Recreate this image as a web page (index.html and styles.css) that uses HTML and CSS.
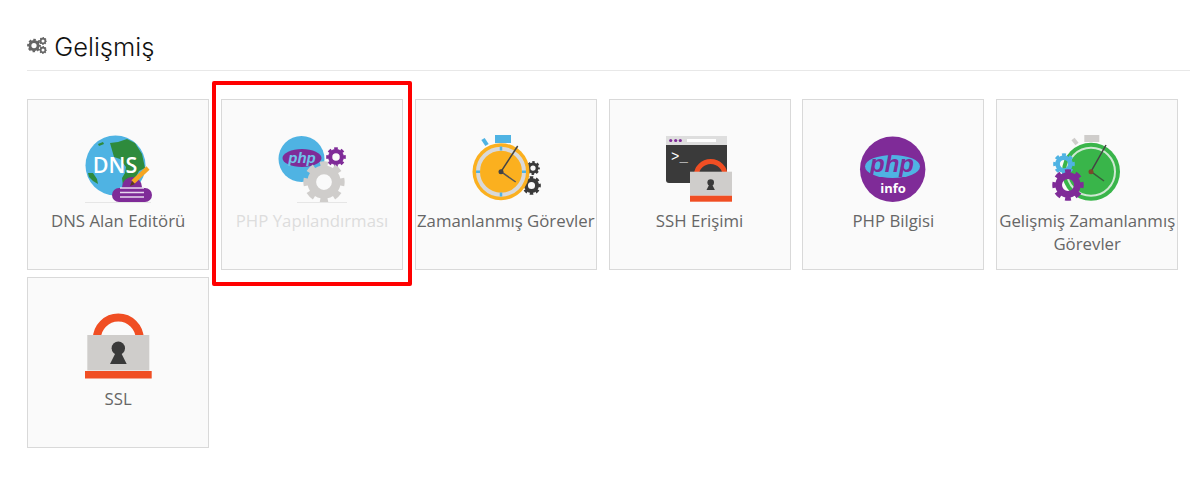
FILE: index.html
```html
<!DOCTYPE html>
<html lang="tr">
<head>
<meta charset="utf-8">
<title>Gelişmiş</title>
<link rel="stylesheet" href="styles.css">
</head>
<body>
<svg class="defs" aria-hidden="true">
  <symbol id="gear" viewBox="-12 -12 24 24">
    <circle r="7" fill="none" stroke="currentColor" stroke-width="5"/>
    <circle r="10" fill="none" stroke="currentColor" stroke-width="3.6" pathLength="16" stroke-dasharray="1.100 0.900" stroke-dashoffset="0.550"/>
  </symbol>
</svg>
<main class="section">
  <h2 class="title">
    <svg class="title-icon" viewBox="0 0 20 18">
      <use href="#gear" x="0" y="1.5" width="14" height="14"/>
      <use href="#gear" x="12" y="0" width="8" height="8"/>
      <use href="#gear" x="12" y="9" width="8" height="8"/>
    </svg>
    Gelişmiş
  </h2>
  <div class="grid">
    <a class="card">
      <svg class="icon" viewBox="0 0 70 70">
        <circle cx="32.500" cy="31.500" r="30" fill="#4fb3e3"/>
        <path class="land" d="M27 9l8-1 9-3 8 4 7 11 3 14-6 3-4 8-3 6-9 1-1-8 3-5 1-6-6-8-6-2z"/>
        <path class="land" d="M5 39l5 0 4 6 1 5-5-3-4-4z"/>
        <path class="land" d="M15 10l5-2 1 2-5 2z"/>
        <text class="dns" x="32" y="39">DNS</text>
        <rect x="29" y="54" width="40" height="14" rx="7" fill="#7f2b98"/>
        <circle cx="49" cy="53" r="10" fill="#7f2b98"/>
        <path d="M37 54h24M37 58.500h24M37 63h24" stroke="#e8d8ee" stroke-width="1.400"/>
        <path d="M50 48l15-14" stroke="#f5a623" stroke-width="4.500"/>
        <path d="M47 52l2-5 3 3z" fill="#5b3a1e"/>
        <path d="M2 68.500h66" class="faint"/>
      </svg>
      <span class="label">DNS Alan Editörü</span>
    </a>
    <a class="card card-off">
      <svg class="icon" viewBox="0 0 70 70">
        <circle cx="24.500" cy="25" r="23" fill="#4fb3e3"/>
        <ellipse cx="25" cy="24" rx="19.500" ry="9" fill="#7f2b98"/>
        <text class="php" x="25" y="29" fill="#6fc3ea">php</text>
        <use class="c-purple" href="#gear" x="49" y="13" width="20" height="20"/>
        <use class="c-grey" href="#gear" x="26" y="27" width="42" height="42"/>
        <path d="M20 68.500h52" class="faint"/>
      </svg>
      <span class="label">PHP Yapılandırması</span>
      <div class="mark"></div>
    </a>
    <a class="card">
      <svg class="icon" viewBox="0 0 70 70">
        <rect x="24" y="1" width="16" height="8" fill="#4fb3e3"/>
        <path d="M12 5l4 6" stroke="#4fb3e3" stroke-width="4"/>
        <use class="c-dark" href="#gear" x="55" y="27" width="14" height="14"/>
        <use class="c-dark" href="#gear" x="51" y="42" width="19" height="19"/>
        <circle cx="30" cy="37.700" r="28.500" fill="#fbb01f"/>
        <circle cx="30" cy="37.700" r="23" fill="none" stroke="#d9d9d9" stroke-width="4"/>
        <path d="M30 12.500v4M30 58.500v4M5 37.700h4M51 37.700h4" stroke="#4fb3e3" stroke-width="2.500"/>
        <path d="M30 37.700L46.700 12" stroke="#444" stroke-width="1.500"/>
        <path d="M30 37.700L44.700 48" stroke="#555" stroke-width="1.500"/>
        <circle cx="30" cy="37.700" r="2.500" fill="#444"/>
      </svg>
      <span class="label">Zamanlanmış Görevler</span>
    </a>
    <a class="card">
      <svg class="icon" viewBox="0 0 70 70">
        <path d="M1 11h61v35a3 3 0 0 1-3 3H4a3 3 0 0 1-3-3z" fill="#3a3a3a"/>
        <rect x="1" y="2" width="61" height="9" fill="#dedede"/>
        <circle cx="5.700" cy="6.500" r="1.600" fill="#7f2b98"/>
        <circle cx="10.700" cy="6.500" r="1.600" fill="#7f2b98"/>
        <circle cx="15.300" cy="6.500" r="1.600" fill="#7f2b98"/>
        <rect x="22" y="5" width="29" height="3" fill="#fff"/>
        <text class="prompt" x="6" y="27">&gt;_</text>
        <path d="M31.200 42a14.500 14.500 0 0 1 29 0" fill="none" stroke="#f04e23" stroke-width="5"/>
        <rect x="25" y="37.700" width="42" height="24" fill="#cfcdcb"/>
        <rect x="25" y="61.700" width="42" height="6" fill="#f04e23"/>
        <circle cx="45.700" cy="48.500" r="3.300" fill="#3a3a3a"/>
        <path d="M44.500 50l-3 6h8.400l-3-6z" fill="#3a3a3a"/>
      </svg>
      <span class="label">SSH Erişimi</span>
    </a>
    <a class="card">
      <svg class="icon" viewBox="0 0 70 70">
        <circle cx="34.700" cy="35.300" r="32.700" fill="#7f2b98"/>
        <ellipse cx="34.500" cy="32.500" rx="27.500" ry="11.500" fill="#4fb3e3"/>
        <text class="php php-big" x="34" y="38" fill="#7f2b98">php</text>
        <text class="info" x="35" y="59">info</text>
      </svg>
      <span class="label">PHP Bilgisi</span>
    </a>
    <a class="card">
      <svg class="icon" viewBox="0 0 70 70">
        <rect x="32.300" y="1" width="15" height="7" fill="#cfcdcb"/>
        <path d="M21 5l4 5" stroke="#cfcdcb" stroke-width="4"/>
        <circle cx="39" cy="37.700" r="29" fill="#39b54a"/>
        <circle cx="39" cy="37.700" r="24" fill="none" stroke="#cfe8d2" stroke-width="2"/>
        <path d="M39 37.700L54 11" stroke="#444" stroke-width="1.500"/>
        <path d="M39 37.700L52 47" stroke="#3b5b3b" stroke-width="1.500"/>
        <circle cx="39" cy="37.700" r="2.500" fill="#7a4a2a"/>
        <use class="c-blue" href="#gear" x="1" y="19" width="22" height="22"/>
        <use class="c-purple" href="#gear" x="0" y="35" width="32" height="32"/>
      </svg>
      <span class="label">Gelişmiş Zamanlanmış Görevler</span>
    </a>
    <a class="card">
      <svg class="icon" viewBox="0 0 70 70">
        <path d="M13.800 27a21.500 21.500 0 0 1 43 0" fill="none" stroke="#f04e23" stroke-width="8"/>
        <rect x="4.300" y="23" width="62" height="35.500" fill="#cfcdcb"/>
        <rect x="2" y="59" width="66.700" height="7.500" fill="#f04e23"/>
        <circle cx="35.300" cy="36.300" r="6.700" fill="#3a3a3a"/>
        <path d="M33 40l-6 12h16.700l-6-12z" fill="#3a3a3a"/>
      </svg>
      <span class="label">SSL</span>
    </a>
  </div>
</main>
</body>
</html>
```
FILE: styles.css
```css
* { box-sizing: border-box; }

body {
  margin: 0;
  background: #fff;
  font-family: "Open Sans", "Liberation Sans", sans-serif;
}

.defs { display: none; }

.section { padding: 28px 0 0 27.2px; }

.title {
  display: flex;
  align-items: center;
  gap: 7px;
  height: 43px;
  margin: 0 0 28px;
  border-bottom: 1px solid #e8e8e8;
  padding-bottom: 6px;
  font-family: "Inter", "Liberation Sans", sans-serif;
  font-weight: 300;
  font-size: 25.5px;
  color: #111;
}

.title-icon { width: 20px; height: 18px; color: #666; }

.grid {
  display: grid;
  grid-template-columns: repeat(6, 182px);
  grid-auto-rows: 171px;
  column-gap: 11.8px;
  row-gap: 7px;
}

.card {
  position: relative;
  display: flex;
  flex-direction: column;
  align-items: center;
  padding-top: 35px;
  background: #fafafa;
  border: 1px solid #d9d9d9;
  color: #666;
  font-size: 16.8px;
  line-height: 23px;
  text-align: center;
}

.icon { flex: none; width: 70px; height: 70px; margin-top: -1px; }

.label { margin-top: 5px; }

.card-off .label { color: #ddd; }

.mark {
  position: absolute;
  top: -19px;
  left: -10px;
  right: -10px;
  bottom: -17px;
  border: 4px solid #f00;
  border-radius: 2px;
}

.land { fill: #2e8b3d; }
.faint { stroke: #e6e6e6; stroke-width: 1; fill: none; }

.dns {
  font-family: "Open Sans", sans-serif;
  font-size: 21.5px;
  font-weight: 600;
  fill: #fff;
  text-anchor: middle;
}

.php {
  font-family: "Liberation Sans", sans-serif;
  font-style: italic;
  font-weight: 700;
  font-size: 15px;
  text-anchor: middle;
}

.php-big { font-size: 24px; }

.info {
  font-family: "Open Sans", sans-serif;
  font-weight: 700;
  font-size: 13px;
  fill: #fff;
  text-anchor: middle;
}

.prompt {
  font-family: "Liberation Mono", monospace;
  font-size: 14px;
  fill: #fff;
}

.c-purple { color: #7f2b98; }
.c-grey { color: #cfcdcb; }
.c-dark { color: #3a3a3a; }
.c-blue { color: #4fb3e3; }
```
